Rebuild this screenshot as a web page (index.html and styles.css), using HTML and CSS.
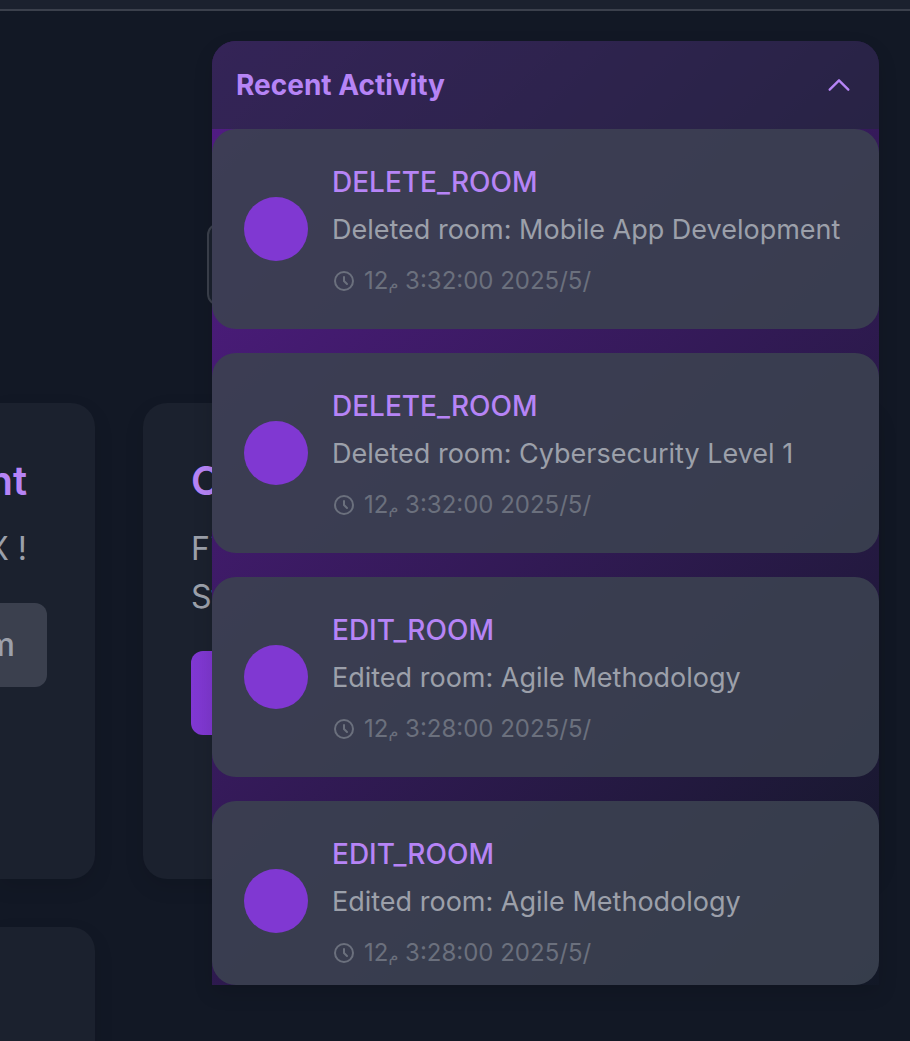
FILE: index.html
```html
<!DOCTYPE html>
<html lang="en">
<head>
<meta charset="utf-8">
<meta name="viewport" content="width=device-width, initial-scale=1">
<title>Rooms</title>
<link rel="stylesheet" href="styles.css">
</head>
<body>
<svg class="defs" aria-hidden="true">
  <symbol id="clock" viewBox="0 0 24 24"><circle cx="12" cy="12" r="9"/><path d="M12 8v4l3 3"/></symbol>
</svg>
<header class="topbar"></header>
<main class="page">
  <div class="toolbar"><input class="search" type="text" aria-label="Search rooms"></div>
  <div class="rooms">
    <article class="card card-start">
      <h2 class="card-title">nt</h2>
      <p class="card-text">X !</p>
      <button class="button button-muted" type="button">m</button>
    </article>
    <article class="card">
      <h2 class="card-title">C</h2>
      <p class="card-text">Fi<br>St</p>
      <button class="button" type="button" aria-label="Join"></button>
    </article>
    <article class="card card-start"></article>
  </div>
</main>
<section class="panel" aria-labelledby="activity-title">
  <div class="panel-head">
    <h2 class="panel-title" id="activity-title">Recent Activity</h2>
    <button class="toggle" type="button" aria-label="Collapse">
      <svg class="chevron" viewBox="0 0 24 24"><path d="M4 16L12 8L20 16"/></svg>
    </button>
  </div>
  <ul class="list">
    <li class="item">
      <span class="avatar"></span>
      <div class="body">
        <h3 class="action">DELETE_ROOM</h3>
        <p class="detail">Deleted room: Mobile App Development</p>
        <p class="time"><svg class="clock"><use href="#clock"/></svg><bdo dir="ltr">12<span class="meridiem">م</span> 3:32:00 2025/5/</bdo></p>
      </div>
    </li>
    <li class="item">
      <span class="avatar"></span>
      <div class="body">
        <h3 class="action">DELETE_ROOM</h3>
        <p class="detail">Deleted room: Cybersecurity Level 1</p>
        <p class="time"><svg class="clock"><use href="#clock"/></svg><bdo dir="ltr">12<span class="meridiem">م</span> 3:32:00 2025/5/</bdo></p>
      </div>
    </li>
    <li class="item">
      <span class="avatar"></span>
      <div class="body">
        <h3 class="action">EDIT_ROOM</h3>
        <p class="detail">Edited room: Agile Methodology</p>
        <p class="time"><svg class="clock"><use href="#clock"/></svg><bdo dir="ltr">12<span class="meridiem">م</span> 3:28:00 2025/5/</bdo></p>
      </div>
    </li>
    <li class="item">
      <span class="avatar"></span>
      <div class="body">
        <h3 class="action">EDIT_ROOM</h3>
        <p class="detail">Edited room: Agile Methodology</p>
        <p class="time"><svg class="clock"><use href="#clock"/></svg><bdo dir="ltr">12<span class="meridiem">م</span> 3:28:00 2025/5/</bdo></p>
      </div>
    </li>
  </ul>
</section>
</body>
</html>
```
FILE: styles.css
```css
* { box-sizing: border-box; margin: 0; padding: 0; }
body {
  position: relative;
  height: 100vh;
  overflow: hidden;
  background: #121825;
  color: #9ca0aa;
  font-family: Inter, "DejaVu Sans", sans-serif;
}
.defs { position: absolute; width: 0; height: 0; }
.topbar { height: 11px; background: #1b212e; border-bottom: 2px solid #3b404c; }
.toolbar { padding: 212px 31px 0 207px; }
.search {
  display: block;
  width: 100%;
  height: 83px;
  border: 2px solid #3b404c;
  border-radius: 12px;
  background: #1b212e;
  color: inherit;
  font: inherit;
}
.rooms {
  display: grid;
  grid-template-columns: 95px 1fr;
  gap: 48px;
  padding: 97px 31px 0 0;
}
.card {
  min-height: 476px;
  padding: 48px;
  border-radius: 24px;
  background: #1b212e;
  box-shadow: 0 8px 20px rgba(0, 0, 0, 0.1);
}
.card-start {
  display: flex;
  flex-direction: column;
  align-items: flex-end;
  padding-left: 0;
  border-radius: 0 24px 24px 0;
}
.card-start .card-title, .card-start .card-text { padding-right: 20px; white-space: nowrap; }
.card-title { color: #b684f6; font-size: 40px; font-weight: 600; line-height: 60px; margin-bottom: 14px; }
.card-text { font-size: 32px; line-height: 48px; margin-bottom: 30px; }
.button {
  display: block;
  width: 100%;
  height: 84px;
  border: 0;
  border-radius: 12px;
  background: linear-gradient(90deg, #8038d2, #5c2a98);
  color: #9ca0aa;
  font: 500 32px/48px Inter, sans-serif;
}
.button-muted {
  display: flex;
  align-items: center;
  justify-content: flex-end;
  width: 47px;
  padding-right: 32px;
  border-radius: 0 12px 12px 0;
  background: #3b404e;
}
.panel {
  position: absolute;
  top: 41px;
  right: 31px;
  left: 212px;
  border-radius: 24px 24px 0 0;
  background: linear-gradient(135deg, #541c88, #121826);
  box-shadow: 0 8px 20px rgba(0, 0, 0, 0.12);
}
.panel-head {
  display: flex;
  align-items: center;
  justify-content: space-between;
  height: 88px;
  padding: 0 24px;
  border-radius: 24px 24px 0 0;
  background: rgba(31, 41, 55, 0.6);
}
.panel-title { color: #b684f6; font-size: 28px; font-weight: 700; line-height: 42px; }
.toggle { display: flex; padding: 2px; border: 0; background: none; }
.chevron { width: 28px; height: 28px; fill: none; stroke: #b684f6; stroke-width: 2; stroke-linecap: round; stroke-linejoin: round; }
.list { display: grid; grid-template-columns: minmax(0, 1fr); gap: 24px; list-style: none; }
.item {
  display: flex;
  align-items: center;
  gap: 24px;
  padding: 32px;
  border-radius: 24px;
  background: rgba(59, 65, 80, 0.9);
}
.item:last-child { padding-bottom: 16px; }
.avatar { flex: none; width: 64px; height: 64px; border-radius: 50%; background: #8038d2; }
.body { min-width: 0; }
.action { color: #b684f6; font-size: 28px; font-weight: 500; line-height: 42px; }
.detail { margin-top: 6px; font-size: 27px; line-height: 42px; }
.time {
  display: flex;
  align-items: center;
  gap: 8px;
  height: 32px;
  margin-top: 14px;
  color: #6b707d;
  font-size: 24px;
  line-height: 32px;
}
.clock { width: 24px; height: 24px; fill: none; stroke: currentColor; stroke-width: 2; stroke-linecap: round; }
.meridiem { font-family: "DejaVu Sans", sans-serif; font-size: 16px; line-height: 16px; }
```
